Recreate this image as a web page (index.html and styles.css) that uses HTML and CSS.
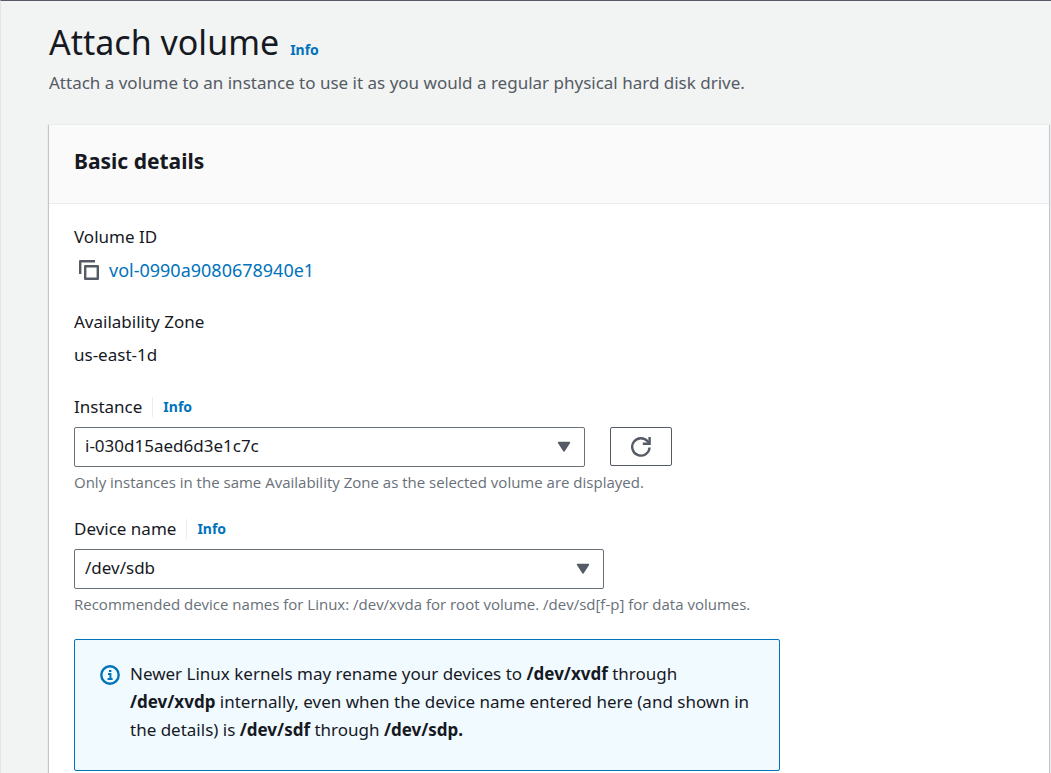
FILE: index.html
```html
<!DOCTYPE html>
<html lang="en">
<head>
<meta charset="utf-8">
<meta name="viewport" content="width=device-width, initial-scale=1">
<title>Attach volume</title>
<link rel="stylesheet" href="styles.css">
</head>
<body>
<main class="page">
  <header class="page-header">
    <div class="title-row">
      <h1 class="page-title">Attach volume</h1>
      <a class="info" href="#info">Info</a>
    </div>
    <p class="subtitle">Attach a volume to an instance to use it as you would a regular physical hard disk drive.</p>
  </header>
  <section class="card">
    <div class="card-header"><h2 class="card-title">Basic details</h2></div>
    <form class="card-body">
      <div class="detail">
        <div class="detail-label">Volume ID</div>
        <div class="detail-value volume">
          <button class="copy" type="button" aria-label="Copy volume ID">
            <svg width="20" height="20" viewBox="0 0 20 20" fill="none" stroke="currentColor" stroke-width="2.4" stroke-linejoin="round"><path d="M1.2 14V1.2H16"/><rect x="6.2" y="6.2" width="12.6" height="12.6"/></svg>
          </button>
          <a class="link" href="#volume">vol-0990a9080678940e1</a>
        </div>
      </div>
      <div class="detail">
        <div class="detail-label">Availability Zone</div>
        <div class="detail-value">us-east-1d</div>
      </div>
      <div class="field">
        <div class="label-row"><label for="instance">Instance</label><a class="info divided" href="#instance-info">Info</a></div>
        <div class="control-row">
          <div class="select-wrap instance-select">
            <select id="instance" class="select"><option>i-030d15aed6d3e1c7c</option></select>
            <svg class="caret" width="14" height="12" viewBox="0 0 14 12"><path d="M1.5 1.5h11L7 10z" fill="currentColor" stroke="currentColor" stroke-width="1.4" stroke-linejoin="round"/></svg>
          </div>
          <button class="refresh" type="button" aria-label="Refresh instances">
            <svg width="22" height="22" viewBox="0 0 22 22" fill="none" stroke="currentColor" stroke-width="2.4"><path d="M19.6 11.5A8.7 8.7 0 1 1 17.6 5.3L19 6.8"/><path d="M19.6 1v6.8h-6.8"/></svg>
          </button>
        </div>
        <p class="hint">Only instances in the same Availability Zone as the selected volume are displayed.</p>
      </div>
      <div class="field">
        <div class="label-row"><label for="device">Device name</label><a class="info divided" href="#device-info">Info</a></div>
        <div class="select-wrap device-select">
          <select id="device" class="select"><option>/dev/sdb</option></select>
          <svg class="caret" width="14" height="12" viewBox="0 0 14 12"><path d="M1.5 1.5h11L7 10z" fill="currentColor" stroke="currentColor" stroke-width="1.4" stroke-linejoin="round"/></svg>
        </div>
        <p class="hint">Recommended device names for Linux: /dev/xvda for root volume. /dev/sd[f-p] for data volumes.</p>
      </div>
      <div class="alert" role="note">
        <svg class="alert-icon" width="20" height="20" viewBox="0 0 20 20" fill="none" stroke="currentColor" stroke-width="2.4"><circle cx="10" cy="10" r="8.7"/><path d="M8 9h2.4v5M7.6 14h5M9 6h2.4" stroke-width="2"/></svg>
        <p class="alert-text">Newer Linux kernels may rename your devices to <b>/dev/xvdf</b> through <b>/dev/xvdp</b> internally, even when the device name entered here (and shown in the details) is <b>/dev/sdf</b> through <b>/dev/sdp.</b></p>
      </div>
    </form>
  </section>
</main>
</body>
</html>
```
FILE: styles.css
```css
* { box-sizing: border-box; }
body {
  margin: 0;
  background: #f2f3f3;
  color: #16191f;
  font: 17px/28px "Noto Sans", "Open Sans", sans-serif;
}
h1, h2, p { margin: 0; }
a { color: #0073bb; text-decoration: none; }
.page {
  display: flex;
  flex-direction: column;
  min-height: 100vh;
  padding: 20px 2px 0 48px;
  border-top: 1px solid #545b64;
  border-left: 1px solid #e3e6e6;
}
.page-header { padding-bottom: 22px; }
.title-row { display: flex; align-items: baseline; gap: 11px; }
.page-title { font-size: 34px; font-weight: 400; line-height: 43px; }
.info { font-size: 14px; font-weight: 700; line-height: 20px; }
.subtitle { color: #545b64; line-height: 38px; }
.card {
  flex: 1;
  background: #fff;
  border-top: 1px solid #eaeded;
  box-shadow: 0 1px 1px 0 #aab7b8, 1px 1px 1px 0 #c4cacd, -1px 1px 1px 0 #c4cacd;
}
.card-header {
  padding: 19px 25px 25px;
  background: #fafafa;
  border-bottom: 1px solid #eaeded;
}
.card-title { font-size: 21px; line-height: 34px; }
.card-body { padding: 19px 25px 2px; }
.detail { margin-bottom: 24px; }
.detail-label { margin-bottom: 5px; }
.volume { display: flex; align-items: center; gap: 10px; padding-left: 5px; }
.copy { display: flex; padding: 0; border: 0; background: none; color: #545b64; }
.link { font-size: 18px; }
.field { margin-bottom: 23px; }
.label-row { display: flex; align-items: center; margin-bottom: 6px; }
.divided { margin-left: 10px; padding-left: 10px; border-left: 1px solid #eaeded; }
.control-row { display: flex; gap: 25px; }
.select-wrap { position: relative; width: 100%; }
.instance-select { max-width: 511px; }
.device-select { max-width: 530px; }
.select {
  display: block;
  width: 100%;
  height: 40px;
  padding: 0 40px 2px 10px;
  appearance: none;
  background: #fff;
  border: 1px solid #687078;
  border-radius: 2px;
  color: inherit;
  font: inherit;
}
.caret { position: absolute; right: 14px; top: 14px; color: #545b64; pointer-events: none; }
.refresh {
  display: flex;
  align-items: center;
  justify-content: center;
  flex: none;
  width: 62px;
  height: 39px;
  padding: 0;
  background: #fff;
  border: 1px solid #545b64;
  border-radius: 2px;
  color: #545b64;
}
.hint {
  margin-top: 5px;
  color: #687078;
  font-family: "Open Sans", "Noto Sans", sans-serif;
  font-size: 15px;
  line-height: 20px;
}
.alert {
  display: flex;
  gap: 10px;
  max-width: 706px;
  margin-top: 25px;
  padding: 20px 25px 26px;
  background: #f1faff;
  border: 1px solid #0073bb;
  border-radius: 2px;
}
.alert-icon { flex: none; margin-top: 5px; color: #0073bb; }
```
